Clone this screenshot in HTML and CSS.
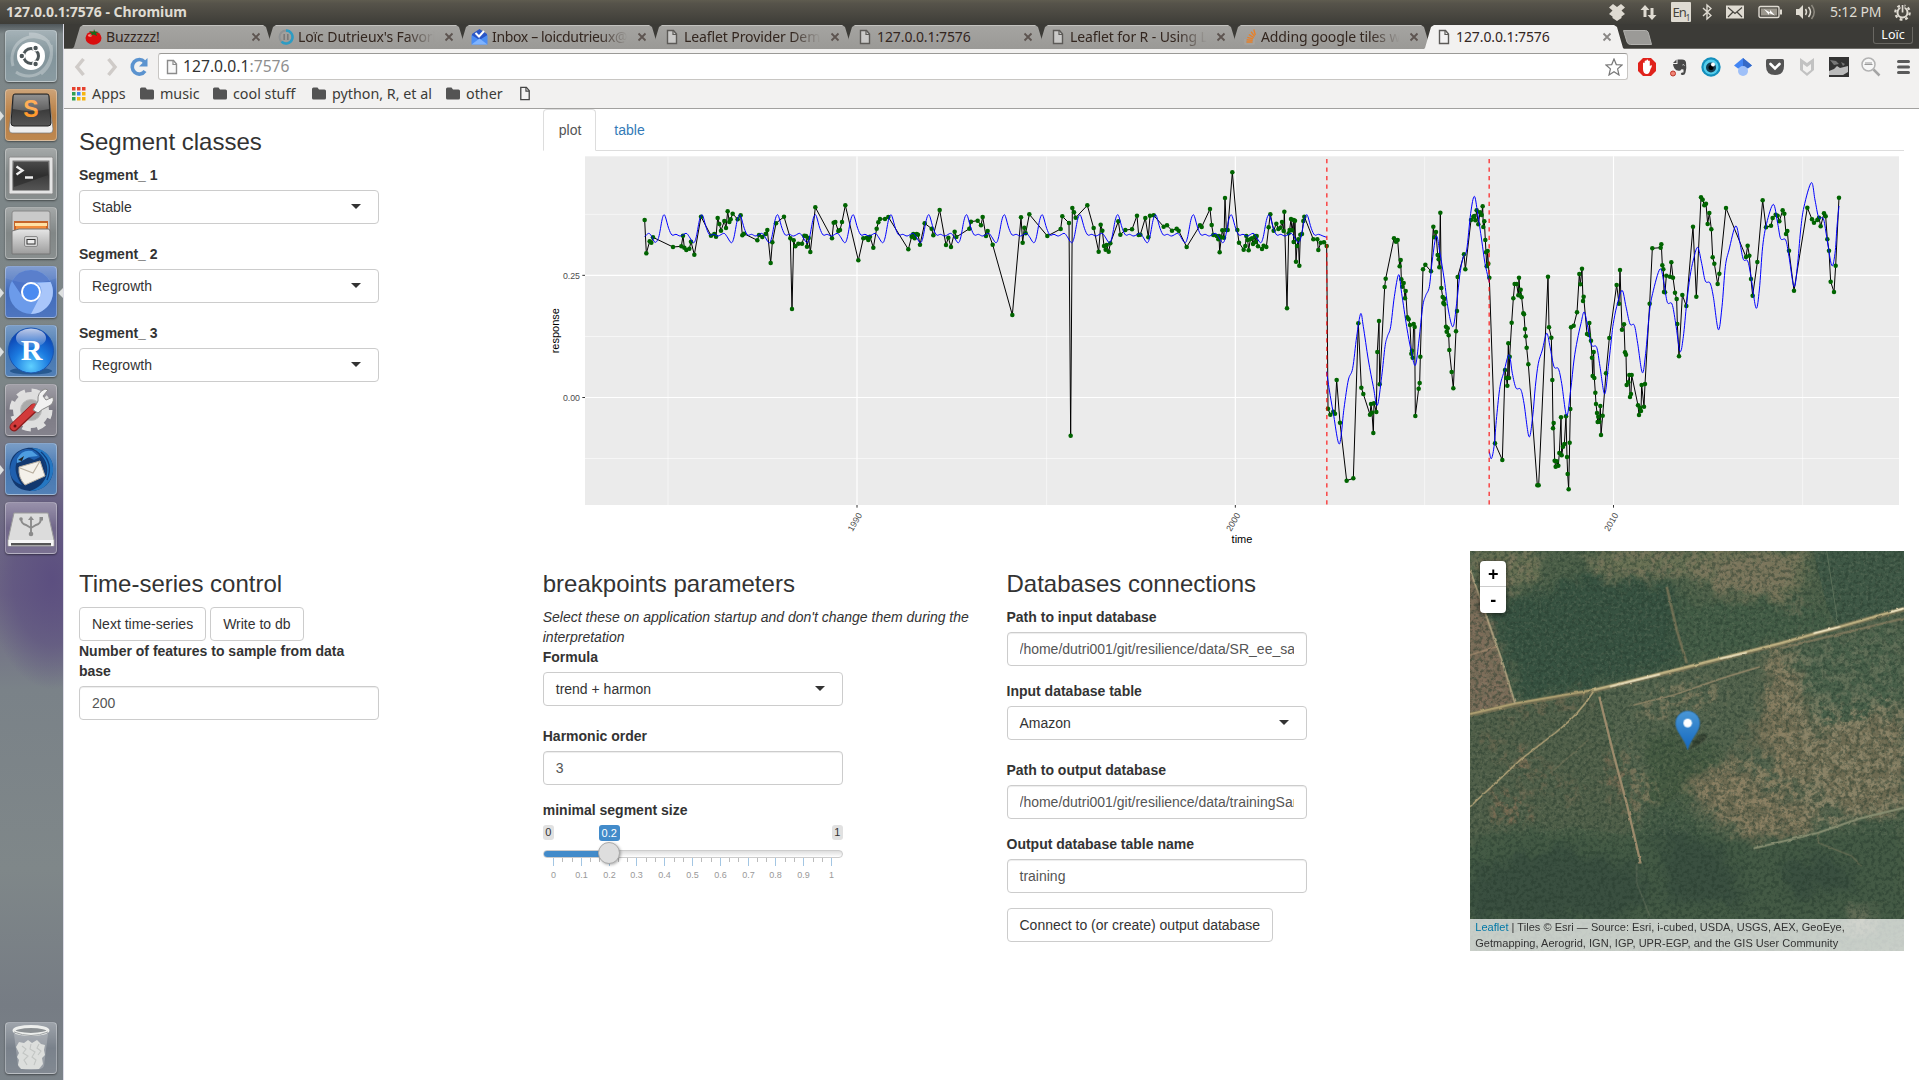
FILE: index.html
```html
<!DOCTYPE html>
<html lang="en">
<head>
<meta charset="utf-8">
<title>127.0.0.1:7576</title>
<link rel="stylesheet" href="styles.css">
</head>
<body>
<svg class="defs" width="0" height="0" aria-hidden="true">
  <defs>
    <symbol id="page" viewBox="0 0 12 16"><path d="M1.5 1.5h6l3 3.5v9.5h-9z" fill="#f4f4f3" fill-opacity=".5" stroke="currentColor" stroke-width="1.4"/><path d="M7 1.5V5.500h3.500" fill="none" stroke="currentColor" stroke-width="1.2"/></symbol>
    <symbol id="folder" viewBox="0 0 14 13"><path d="M0 2q0-1.500 1.500-1.500h4L7 2.500h5.500q1.500 0 1.500 1.500v7q0 1.500-1.500 1.500h-11Q0 12.500 0 11z" fill="#545454"/></symbol>
    <symbol id="close" viewBox="0 0 10 10"><path d="M1.500 1.500l7 7m0-7l-7 7" stroke="currentColor" stroke-width="1.800"/></symbol>
    <linearGradient id="gloss" x1="0" y1="0" x2="0" y2="1"><stop offset="0" stop-color="#fff" stop-opacity=".75"/><stop offset="1" stop-color="#fff" stop-opacity=".08"/></linearGradient>
    <linearGradient id="dark" x1="0" y1="0" x2="0" y2="1"><stop offset="0" stop-color="#777"/><stop offset=".5" stop-color="#3c3c3c"/><stop offset="1" stop-color="#555"/></linearGradient>
    <linearGradient id="silver" x1="0" y1="0" x2="0" y2="1"><stop offset="0" stop-color="#e6e6e6"/><stop offset="1" stop-color="#9d9d9d"/></linearGradient>
    <radialGradient id="rball" cx=".5" cy=".85" r=".8"><stop offset="0" stop-color="#5fd0ff"/><stop offset=".5" stop-color="#1c7be0"/><stop offset="1" stop-color="#0a3fae"/></radialGradient>
    <linearGradient id="pin" x1="0" y1="0" x2="0" y2="1"><stop offset="0" stop-color="#4a97d6"/><stop offset="1" stop-color="#1468bf"/></linearGradient>
  </defs>
</svg>

<header class="panel">
  <div class="panel-title">127.0.0.1:7576 - Chromium</div>
  <div class="tray">
    <svg width="18" height="18" viewBox="0 0 18 18"><path d="M5 1l4 3 4-3 4 3.500-3.500 3L17 11l-3.500 2.500v1.500L9 18l-4.500-3v-1.500L1 11l3.500-3.500L1 4.500z" fill="#dfdbd2"/></svg>
    <svg width="17" height="18" viewBox="0 0 17 18"><path d="M5 2L.5 7H3.500v7h3V7h3zM12 17l-4.500-5h3V5h3v7h3z" fill="#dfdbd2"/></svg>
    <span class="lang">En<sub>1</sub></span>
    <svg width="10" height="18" viewBox="0 0 10 18"><path d="M1 5l8 7.500L5 16V2l4 3.500L1 13" fill="none" stroke="#dfdbd2" stroke-width="1.400"/></svg>
    <svg width="18" height="14" viewBox="0 0 18 14"><rect y=".5" width="18" height="13" fill="#dfdbd2"/><path d="M2 2.500l7 6 7-6M2 12l5-5m9 5l-5-5" fill="none" stroke="#45433d" stroke-width="1.200"/></svg>
    <svg width="24" height="14" viewBox="0 0 24 14"><rect x="1" y="1.500" width="20" height="11" rx="1.500" fill="none" stroke="#dfdbd2" stroke-width="1.400"/><rect x="3" y="3.500" width="16" height="7" fill="#9b978d"/><path d="M22 4.500h2v5h-2z" fill="#dfdbd2"/><path d="M6 4l6 3.500V5l5 5.500-6-2.500v2z" fill="#fff"/></svg>
    <svg width="20" height="16" viewBox="0 0 20 16"><path d="M0 5h3l4-4v14l-4-4H0z" fill="#dfdbd2"/><path d="M9.500 5q2 3 0 6M12.500 3q4 5 0 10" fill="none" stroke="#dfdbd2" stroke-width="1.500"/><path d="M15.500 1q5.500 7 0 14" fill="none" stroke="#8d897f" stroke-width="1.500"/></svg>
    <span class="clock">5:12 PM</span>
    <svg width="17" height="17" viewBox="0 0 17 17"><circle cx="8.500" cy="8.500" r="5" fill="none" stroke="#dfdbd2" stroke-width="2"/><circle cx="8.500" cy="8.500" r="7.200" fill="none" stroke="#dfdbd2" stroke-width="2.200" stroke-dasharray="2.800 2.850"/><path d="M6.500 0h4v8h-4z" fill="#4c4942"/><path d="M7.700 1h1.700v7.500H7.700z" fill="#dfdbd2"/></svg>
  </div>
</header>

<div class="desktop">
  <nav class="launcher">
    <div class="tile t-dash"><svg viewBox="0 0 52 52"><path d="M8 36C2 14 24-2 44 12M46 15C50 38 28 54 11 42M24 4C48 2 54 30 36 44" fill="none" stroke="#fff" stroke-opacity=".28" stroke-width="3"/><circle cx="26" cy="26" r="14" fill="#fff"/><circle cx="26" cy="26" r="7.500" fill="none" stroke="#4c5558" stroke-width="3"/><g fill="#4c5558" stroke="#fff" stroke-width="1.200"><circle cx="16.800" cy="26" r="2.800"/><circle cx="30.600" cy="18" r="2.800"/><circle cx="30.600" cy="34" r="2.800"/></g></svg></div>
    <div class="tile t-sublime running"><svg viewBox="0 0 52 52"><path d="M8 8q0-2 2-2h32q2 0 2 2l4 32q0 4-3 4H7q-3 0-3-4z" fill="#eee" stroke="#777" stroke-width=".7"/><path d="M10 5h32q2 0 2 2l2 27q0 3-3 3H9q-3 0-3-3L8 7q0-2 2-2z" fill="url(#dark)" stroke="#222"/><text x="26" y="28" text-anchor="middle" font-family="Liberation Sans" font-weight="700" font-size="23" fill="#ff9a2e">S</text><path d="M9 6h34l1 14q-17 4-36 0z" fill="#fff" opacity=".2"/></svg></div>
    <div class="tile t-grey"><svg viewBox="0 0 52 52"><rect x="4" y="9" width="44" height="37" rx="1.500" fill="#e4e4e4" stroke="#8a8a8a"/><rect x="7.500" y="12.500" width="37" height="30" fill="url(#dark)"/><path d="M9 14h34v13L9 39z" fill="#222" opacity=".5"/><path d="M11.500 18.500l6 4-6 4M20 29.500h8" fill="none" stroke="#eee" stroke-width="2.300"/></svg></div>
    <div class="tile t-grey"><svg viewBox="0 0 52 52"><path d="M7 6q0-2 2-2h34q2 0 2 2v18H7z" fill="#c9c9c9" stroke="#888"/><path d="M9 14h34v14H9z" fill="#c5642a"/><path d="M10 16h32v3H10z" fill="#ffe1a6"/><path d="M11 19h30v4H11z" fill="#f28c3c"/><path d="M7 24l7-2h30l1 2v23H7z" fill="url(#silver)" stroke="#777"/><rect x="19.500" y="29.500" width="13" height="10" rx="1.500" fill="#d7d7d7" stroke="#888"/><rect x="22" y="32.500" width="8" height="4.500" fill="#eee" stroke="#333"/></svg></div>
    <div class="tile t-chromium running focused"><svg viewBox="0 0 52 52"><circle cx="26" cy="26" r="22" fill="#6c9bea"/><path d="M26 4a22 22 0 0 1 19.500 12H26a10 10 0 0 0-9 14L7 15A22 22 0 0 1 26 4z" fill="#4d75c8"/><path d="M45.500 16A22 22 0 0 1 26 48l9-17.500A10 10 0 0 0 32 17z" fill="#a9c6fa"/><circle cx="26" cy="26" r="10" fill="#fff"/><circle cx="26" cy="26" r="8" fill="#4a8af0"/><path d="M0 0h52v12Q26 22 0 12z" fill="#fff" opacity=".08"/></svg></div>
    <div class="tile t-r running"><svg viewBox="0 0 52 52"><ellipse cx="26" cy="46" rx="21" ry="3.500" fill="#0b3f78" opacity=".6"/><circle cx="26" cy="25.500" r="22.500" fill="url(#rball)" stroke="#1a55b0"/><text x="26.500" y="35" text-anchor="middle" font-family="Liberation Serif" font-weight="700" font-size="30" fill="#fff">R</text><ellipse cx="26" cy="13" rx="15" ry="9.500" fill="url(#gloss)"/></svg></div>
    <div class="tile t-tools"><svg viewBox="0 0 52 52"><circle cx="26" cy="26" r="18" fill="none" stroke="#e0e0e0" stroke-width="7" stroke-dasharray="8 6.140"/><circle cx="26" cy="26" r="13.500" fill="none" stroke="#dedede" stroke-width="9"/><circle cx="26" cy="26" r="10.500" fill="#aaa" stroke="#bbb"/><path d="M9 43L29 24" stroke="#8c1d1d" stroke-width="9" stroke-linecap="round"/><path d="M9 42.500L29 23.500" stroke="#d23a3a" stroke-width="7" stroke-linecap="round"/><path d="M28 26l5-9q-1-9 7-12l3 1-5 6 3 4 7-3q2 7-6 10-5 2-9 6z" fill="#f1f1f1" stroke="#888"/><circle cx="10" cy="42" r="1.500" fill="#5e1010"/></svg></div>
    <div class="tile t-mail running"><svg viewBox="0 0 52 52"><path d="M5 28C3 13 15 3 29 5c13 2 20 12 19 23-1 12-10 20-23 20C12 47 6 40 5 28z" fill="#12386f"/><path d="M27 5c15 0 22 12 21 24-2 12-11 19-23 19 9-3 15-9 17-17 2-11-4-20-15-26z" fill="#2577c2"/><path d="M36 9c8 7 11 16 6 28M31 8c9 8 12 18 7 27" fill="none" stroke="#0f3f82" stroke-width="1.300"/><path d="M14 24l21-6 5 15-20 9q-7-7-6-18z" fill="#f4f1ea" stroke="#b5ada0"/><path d="M15 25l13 5 7-12" fill="none" stroke="#b9b0a0" stroke-width="1.200"/><path d="M5 27C6 16 11 8 21 6q10-1 14 8l-6 3q-6-4-12-2C9 17 8 30 17 42 8 39 5 33 5 27z" fill="#1f5fae"/><path d="M12 16q5-10 15-8l6 5-9 1-9 5-3 1z" fill="#4d9de0"/><path d="M13 17l6-4-2 5z" fill="#222"/></svg></div>
    <div class="tile t-usb"><svg viewBox="0 0 52 52"><path d="M9 11h34l6 27v6H3v-6z" fill="#dcdcdc" stroke="#9a9a9a"/><path d="M3.500 38h45v6h-45z" fill="#f7f7f7"/><path d="M6 41h40v2.500H6z" fill="#555"/><path d="M26 32V17m-10-1q0 6 5 7l5 3 5-3q5-1 5-7" fill="none" stroke="#8b8b8b" stroke-width="1.900"/><path d="M23 18l3-4 3 4z" fill="#8b8b8b"/><circle cx="16" cy="17" r="1.800" fill="#8b8b8b"/><path d="M34.500 15h3.500v3.500h-3.500z" fill="#8b8b8b"/><circle cx="26" cy="32" r="2.300" fill="#8b8b8b"/></svg></div>
    <div class="tile t-trash"><svg viewBox="0 0 52 52"><path d="M9 12h34l-4 32q-1 4-13 4t-13-4z" fill="#fff" fill-opacity=".22"/><path d="M11 25l3-5 5 1 4-3 4 3 5-3 4 4 4 1-1 5 1 5-3 3 1 6-4 5H16l-3-4 1-5-2-3 2-4z" fill="#dcdedc"/><path d="M17 24l4 3-3 4 5 3-4 4 3 5m4-21l-1 5 5 3-3 5 4 3-2 5m5-21l-2 4 4 3-3 4" fill="none" stroke="#c2c5c3" stroke-width="1.100"/><ellipse cx="26" cy="8.500" rx="17" ry="4" fill="#8b9093" stroke="#eceeec" stroke-width="3"/><path d="M9 10q17 7 34 0" fill="none" stroke="#9da1a3"/></svg></div>
  </nav>

  <div class="browser">
    <div class="tabstrip">
      <div class="tab"><span class="fav"><svg width="17" height="16" viewBox="0 0 17 16"><ellipse cx="8.500" cy="9" rx="8" ry="6.800" fill="#d90d0d"/><ellipse cx="5" cy="6.500" rx="2" ry="1.300" fill="#ff8b80"/><path d="M8.500 3L4 2l3 3-2 2 3.500-1.500L12 7l-1-3 3-1-4-.5L9 0z" fill="#176b1c"/></svg></span><span class="tt">Buzzzzz!</span><svg class="x"><use href="#close"/></svg></div>
      <div class="tab"><span class="fav"><svg width="16" height="16" viewBox="0 0 16 16"><circle cx="8" cy="8" r="6.500" fill="none" stroke="#8e9294" stroke-width="2"/><path d="M8 1.500a6.500 6.500 0 1 1-4.500 11.200" fill="none" stroke="#2c9cc4" stroke-width="2.500"/><path d="M6.200 5v6M9.800 5v6" stroke="#7a7a7a" stroke-width="1.600"/></svg></span><span class="tt fade">Loïc Dutrieux's Favorites</span><svg class="x"><use href="#close"/></svg></div>
      <div class="tab"><span class="fav"><svg width="17" height="16" viewBox="0 0 17 16"><path d="M1 5l7.500-5L16 5v6H1z" fill="#2a56c6"/><path d="M.5 6l8 5 8-5v9.500H.5z" fill="#4a8df4"/><path d="M.5 15.500l8-6 8 6z" fill="#7eb3ff"/><path d="M4.500 4L8 7.500 13 2" fill="none" stroke="#fff" stroke-width="2"/></svg></span><span class="tt fade tight">Inbox – loicdutrieux@gmail</span><svg class="x"><use href="#close"/></svg></div>
      <div class="tab"><span class="fav"><svg width="12" height="16"><use href="#page"/></svg></span><span class="tt fade">Leaflet Provider Demo</span><svg class="x"><use href="#close"/></svg></div>
      <div class="tab"><span class="fav"><svg width="12" height="16"><use href="#page"/></svg></span><span class="tt">127.0.0.1:7576</span><svg class="x"><use href="#close"/></svg></div>
      <div class="tab"><span class="fav"><svg width="12" height="16"><use href="#page"/></svg></span><span class="tt fade">Leaflet for R - Using Leaflet</span><svg class="x"><use href="#close"/></svg></div>
      <div class="tab"><span class="fav"><svg width="14" height="16" viewBox="0 0 14 16"><path d="M2 10v5h9v-5" fill="none" stroke="#aaa59f" stroke-width="1.200"/><path d="M3.500 13h6M3.700 10.800l6 .6M4.300 8.300l5.700 1.600M5.800 5.500l5 3.200M8 2.800l3.700 4.600M10.800.5l1.500 5.500" stroke="#e8812a" stroke-width="1.400"/></svg></span><span class="tt fade">Adding google tiles with</span><svg class="x"><use href="#close"/></svg></div>
      <div class="tab active"><span class="fav"><svg width="12" height="16"><use href="#page"/></svg></span><span class="tt">127.0.0.1:7576</span><svg class="x"><use href="#close"/></svg></div>
      <svg class="newtab" width="30" height="15" viewBox="0 0 30 15"><path d="M1.500.5h22q2 0 2.800 2L29.500 14.500h-21q-2.500 0-3.500-2.500z" fill="#9b9a97" stroke="#b1b0ad"/></svg>
      <span class="profile">Loïc</span>
    </div>

    <div class="toolbar">
      <svg width="12" height="20" viewBox="0 0 12 20"><path d="M9.500 2L3 10l6.500 8" fill="none" stroke="#cfcbc8" stroke-width="3.500"/></svg>
      <svg class="fwd" width="12" height="20" viewBox="0 0 12 20"><path d="M2.500 2L9 10l-6.500 8" fill="none" stroke="#cfcbc8" stroke-width="3.500"/></svg>
      <svg class="reload" width="18" height="20" viewBox="0 0 18 20"><path d="M14.500 5A7 7.300 0 1 0 15 14" fill="none" stroke="#5b93cf" stroke-width="3.600"/><path d="M17.500 1v8.500H9z" fill="#5b93cf"/></svg>
      <div class="omnibox">
        <svg class="pg" width="12" height="16"><use href="#page"/></svg>
        <span class="url">127.0.0.1<i>:7576</i></span>
        <svg class="star" width="18" height="18" viewBox="0 0 18 18"><path d="M9 1l2.300 5.600 5.700.4-4.400 3.900L14 17l-5-3.200L4 17l1.400-6.100L1 7l5.700-.4z" fill="#fff" stroke="#777" stroke-width="1.200"/></svg>
      </div>
      <div class="exts">
        <svg viewBox="0 0 20 20"><path d="M6 1h8l5 5v8l-5 5H6l-5-5V6z" fill="#e0221b"/><path d="M6 9V6q1-1 1.700 0V4q1-1 1.700 0V3q1.200-1 1.700 0v1q1-1 1.700 0v5l1.700-1q1 1-1 4-1 5-3.500 5Q6 17 6 12z" fill="#fff"/></svg>
        <svg viewBox="0 0 20 20"><path d="M4 6l3.500-3.500V6z" fill="#484848"/><path d="M8.500 2.500h3.500q4.500-.5 5 3 .8 5-.5 10-.7 3-3.500 2.500-2.500-1 0-2.500h1.500v-3q-2.500-1-3 1-4 1-6-2Q4 9 4 7h4.500z" fill="#484848"/><path d="M13.500 8q1.500-1 2 .5" stroke="#ddd" fill="none"/><circle cx="4" cy="16.500" r="2.500" fill="#f08577" stroke="#bd3528"/></svg>
        <svg viewBox="0 0 20 20"><circle cx="10" cy="10" r="9.700" fill="#148fbc"/><circle cx="10" cy="10" r="7.500" fill="#55cdec"/><circle cx="10" cy="10.500" r="5" fill="#163d52"/><circle cx="10" cy="10.500" r="2.500" fill="#000"/><circle cx="12" cy="7.500" r="2" fill="#fff"/></svg>
        <svg viewBox="0 0 20 20"><path d="M10 1L1 8.500l4 3h10l4-3z" fill="#4285f4"/><path d="M10 1v10h5l4-2.500z" fill="#3569c6"/><circle cx="10" cy="14" r="5" fill="#9fc0f8"/></svg>
        <svg viewBox="0 0 20 20"><path d="M1 3.500Q1 2 2.500 2h15Q19 2 19 3.500V9q0 9-9 9T1 9z" fill="#545454"/><path d="M5.500 7L10 11.500 14.500 7" fill="none" stroke="#fff" stroke-width="2.600" stroke-linecap="round"/></svg>
        <svg viewBox="0 0 20 20"><path d="M3 1l7 5 7-5v12l-7 6-7-6zM6 7v6l4 3 4-3V7l-4 3z" fill="#c2c2c2" fill-rule="evenodd"/></svg>
        <svg viewBox="0 0 20 20"><path d="M0 0h20v20H0z" fill="#333"/><path d="M0 14l5-2 3-3 3 2 8-2v6l-5 3H0z" fill="#bbb"/><path d="M1 3l6 1 3 3-5 1zM12 5l4 2-2 2z" fill="#777"/></svg>
        <svg viewBox="0 0 20 20"><circle cx="7.500" cy="7.500" r="6.500" fill="#f7f7f7" stroke="#b3b3b3" stroke-width="1.500"/><path d="M3.500 7.500h8M4 6h7" stroke="#999"/><path d="M12.500 12.500l6 6" stroke="#a5a5a5" stroke-width="2.500"/></svg>
        <svg viewBox="0 0 20 20"><path d="M5.500 4.500h10M5.500 10h10M5.500 15.500h10" stroke="#5a5a5a" stroke-width="3" stroke-linecap="round"/></svg>
      </div>
    </div>

    <div class="bookmarks">
      <span class="bm"><svg width="14" height="14" viewBox="0 0 14 14"><path d="M0 0h3.500v3.500H0zM5 0h3.500v3.500H5zM10 0h3.500v3.500H10z" fill="#e6402d"/><path d="M0 5h3.500v3.500H0zM0 10h3.500v3.500H0z" fill="#2ea052"/><path d="M5 5h3.500v3.500H5z" fill="#3e83ee"/><path d="M10 5h3.500v3.500H10zM5 10h3.500v3.500H5zM10 10h3.500v3.500H10z" fill="#f5b40f"/></svg><span style="width:35px">Apps</span></span>
      <span class="bm"><svg width="14" height="13"><use href="#folder"/></svg><span style="width:40px">music</span></span>
      <span class="bm"><svg width="14" height="13"><use href="#folder"/></svg><span style="width:66px">cool stuff</span></span>
      <span class="bm"><svg width="14" height="13"><use href="#folder"/></svg><span style="width:101px">python, R, et al</span></span>
      <span class="bm"><svg width="14" height="13"><use href="#folder"/></svg><span style="width:40px">other</span></span>
      <svg class="dark" width="12" height="15"><use href="#page"/></svg>
    </div>

    <main class="app">
      <div class="row top">
        <section class="col">
          <h3>Segment classes</h3>
          <div class="group sel"><label>Segment_ 1</label><div class="field select">Stable</div></div>
          <div class="group sel"><label>Segment_ 2</label><div class="field select">Regrowth</div></div>
          <div class="group sel"><label>Segment_ 3</label><div class="field select">Regrowth</div></div>
        </section>
        <section class="plot">
          <ul class="nav-tabs"><li class="on">plot</li><li>table</li></ul>
          <svg class="chart" viewBox="9 3 4083 1200">
            <rect x="135" y="19" width="3942" height="1046" fill="#ebebeb"/>
            <g stroke="#fff" stroke-width="1.700"><path d="M384 19v1046M1520 19v1046M2654 19v1046M3788 19v1046M135 193h3942M135 559.500h3942M135 925.500h3942"/></g>
            <g stroke="#fff" stroke-width="3.500"><path d="M951 19v1046M2086 19v1046M3220.500 19v1046M135 376h3942M135 742.500h3942"/></g>
            <path d="M127 376h8M127 742.500h8M951 1065v8M2086 1065v8M3220.500 1065v8" stroke="#333" stroke-width="3"/>
            <path id="obs" fill="none" stroke="#000" stroke-width="3"/>
            <g id="dots" fill="#006400"></g>
            <path id="fit" fill="none" stroke="#00f" stroke-width="3"/>
            <path d="M2360.500 27V1065M2847.500 27V1065" stroke="#f00" stroke-opacity=".8" stroke-width="4" stroke-dasharray="12.800 12.800"/>
            <g class="ticks"><text x="120" y="386" text-anchor="end">0.25</text><text x="120" y="752" text-anchor="end">0.00</text>
              <text transform="translate(967 1095) rotate(-60)" text-anchor="end">1990</text>
              <text transform="translate(2102 1095) rotate(-60)" text-anchor="end">2000</text>
              <text transform="translate(3236 1095) rotate(-60)" text-anchor="end">2010</text></g>
            <g class="titles"><text x="2106" y="1178" text-anchor="middle">time</text><text transform="translate(57 542) rotate(-90)" text-anchor="middle">response</text></g>
          </svg>
        </section>
      </div>

      <div class="row">
        <section class="col">
          <h3>Time-series control</h3>
          <div class="btns"><span class="btn">Next time-series</span><span class="btn">Write to db</span></div>
          <div class="group"><label>Number of features to sample from data base</label><div class="field">200</div></div>
        </section>
        <section class="col">
          <h3>breakpoints parameters</h3>
          <em>Select these on application startup and don't change them during the interpretation</em>
          <div class="group sel"><label>Formula</label><div class="field select">trend + harmon</div></div>
          <div class="group"><label>Harmonic order</label><div class="field">3</div></div>
          <div class="group">
            <label>minimal segment size</label>
            <div class="slider">
              <span class="lim">0</span><span class="lim">1</span><span class="val">0.2</span>
              <div class="rail"><div class="fill" style="width:22%"></div></div>
              <div class="knob"></div>
              <svg class="scale" width="300" height="22"><path id="minor" stroke="#bbb"/><path id="major" stroke="#a3c6e3"/><g id="nums"></g></svg>
            </div>
          </div>
        </section>
        <section class="col">
          <h3>Databases connections</h3>
          <div class="group"><label>Path to input database</label><div class="field"><span>/home/dutri001/git/resilience/data/SR_ee_sample.sqlite</span></div></div>
          <div class="group sel"><label>Input database table</label><div class="field select">Amazon</div></div>
          <div class="group"><label>Path to output database</label><div class="field"><span>/home/dutri001/git/resilience/data/trainingSample.sqlite</span></div></div>
          <div class="group"><label>Output database table name</label><div class="field">training</div></div>
          <span class="btn">Connect to (or create) output database</span>
        </section>
        <section class="col">
          <div class="map">
            <svg class="imagery" viewBox="30 33 1302 1200" preserveAspectRatio="none" color-interpolation-filters="sRGB">
              <defs>
                <filter id="soft" x="-20%" y="-20%" width="140%" height="140%"><feGaussianBlur stdDeviation="18" result="b"/><feTurbulence type="fractalNoise" baseFrequency=".02" numOctaves="4" seed="4"/><feDisplacementMap in="b" scale="90" xChannelSelector="R" yChannelSelector="G"/></filter>
                <filter id="scrub" x="-20%" y="-20%" width="140%" height="140%"><feGaussianBlur stdDeviation="22" result="b"/><feTurbulence type="fractalNoise" baseFrequency=".035" numOctaves="6" seed="9" result="n"/><feDisplacementMap in="b" in2="n" scale="110" xChannelSelector="R" yChannelSelector="G" result="d"/><feColorMatrix in="n" type="matrix" values="0 0 0 0 0 0 0 0 0 0 0 0 0 0 0 0 0 6 0 -2.600"/><feComposite in="d" operator="in"/></filter>
                <filter id="rough" x="-5%" y="-5%" width="110%" height="110%"><feTurbulence type="fractalNoise" baseFrequency=".05" numOctaves="2"/><feDisplacementMap in="SourceGraphic" scale="7" xChannelSelector="R" yChannelSelector="G"/></filter>
                <filter id="grain" x="0" y="0" width="100%" height="100%"><feTurbulence type="fractalNoise" baseFrequency=".09" numOctaves="4" seed="2"/><feColorMatrix type="matrix" values="0 0 0 0 .14 0 0 0 0 .22 0 0 0 0 .17 4 0 0 0 -1.750"/></filter>
                <filter id="glint" x="0" y="0" width="100%" height="100%"><feTurbulence type="fractalNoise" baseFrequency=".11" numOctaves="4" seed="21"/><feColorMatrix type="matrix" values="0 0 0 0 .58 0 0 0 0 .6 0 0 0 0 .5 0 5 0 0 -2.600"/></filter>
              </defs>
              <rect x="30" y="33" width="1302" height="1200" fill="#4d6049"/>
              <path d="M90 200L380 100l260 20 40 250-250 70-260 50z" fill="#375241" filter="url(#soft)"/>
              <path d="M1060 33h272v170l-200 60-30-60z" fill="#3f5846"/>
              <path d="M640 190l460 0 30 75-440 110z" fill="#435c46" filter="url(#soft)"/>
              <path d="M30 33h200l-10 90-160 20zM400 33h650l-40 130-120 10-150-60-340-10z" fill="#6a7154" filter="url(#soft)"/>
              <path d="M720 70l300-30-60 130-170-10z" fill="#78745a" filter="url(#soft)"/>
              <path d="M30 33h200l-10 90-160 20zM400 33h640l-60 130-240-40-340-20zM980 160l60-10-20 90-40-20z" fill="#80785f" filter="url(#scrub)" opacity=".7"/>
              <path d="M30 90l55 155 80 245-135 35z" fill="#766a56"/>
              <path d="M30 90l50 155 85 245-135 35z" fill="#86715e" filter="url(#scrub)" opacity=".7"/>
              <path d="M30 530l370-70 60 200 70 230-200-30-300 60z" fill="#505f49"/>
              <path d="M430 445l902-230v590l-450 120-90-20-150-120-100 90z" fill="#52624c"/>
              <path d="M970 320l362-70v260l-250 80-80-90z" fill="#485f49" filter="url(#soft)"/>
              <path d="M560 560l220 60-60 120-120 90-40-60z" fill="#42583f" filter="url(#soft)" opacity=".8"/>
              <path d="M930 330l60 0 60 200 70 200-150 0-40-120-100 20 90-130zM1060 580l272-80v300l-150 40-110-80zM670 730l150-80 110 110 130 10 20 90-200 50-80-60z" fill="#746c53" filter="url(#soft)" opacity=".8"/>
              <path d="M920 330l70 0 60 180 282-20v320l-460 110-200-180 150-90 110 0-20-120zM470 580l60 90 60 90-40 100zM520 480l280-60-20 60-220 50zM540 760l70 20-60 60z" fill="#958768" filter="url(#scrub)" opacity=".75"/>
              <path d="M960 330l372-70v600l-300 40z" fill="#8a8a70" filter="url(#scrub)" opacity=".35"/>
              <path d="M90 780l80-30 40 60-80 50zM140 660l70-30 20 50-60 20zM240 690l50 10-30 60zM300 750l70-20-20 50zM430 660l50-10 50 180-40-40zM150 510l250-50-40 30-220 40zM60 580l70 20-30 30z" fill="#8c7157" filter="url(#scrub)"/>
              <path d="M30 900l150-40 340 30 60-90 60-20 170 130 300-40 222-60v423H30z" fill="#445a45" filter="url(#soft)"/>
              <path d="M30 1000l250-80 240 60 60 100-150 60H30zM600 850l200 90 60 150-240 0zM960 980l150-40 90 100-200 30z" fill="#3a4f40" filter="url(#soft)"/>
              <path d="M1150 1110l90-10 20 60-80 20z" fill="#69705a" filter="url(#soft)"/>
              <rect x="30" y="33" width="1302" height="1200" filter="url(#grain)" opacity=".45"/>
              <rect x="30" y="33" width="1302" height="850" filter="url(#glint)" opacity=".16"/>
              <g fill="none" filter="url(#rough)">
                <path d="M30 525L165 493 400 452 660 388 960 312 1140 260 1332 207" stroke="#8e7d5c" stroke-width="14" opacity=".6"/>
                <path d="M30 522L165 490 400 450" stroke="#b0a273" stroke-width="6"/>
                <path d="M400 450L660 386 960 310 1140 260 1332 205" stroke="#c0b384" stroke-width="7"/>
                <path d="M450 440L600 403M780 356L860 338M1060 280L1140 260M1290 217L1332 205" stroke="#f0e6c4" stroke-width="5"/>
                <path d="M960 325L1332 235" stroke="#8f8264" stroke-width="7" opacity=".7"/>
                <path d="M400 455Q360 520 290 575L180 660 30 800" stroke="#b0a177" stroke-width="4.500"/>
                <path d="M418 470L460 640 500 790 542 970" stroke="#9c8b6c" stroke-width="7"/>
                <path d="M530 970l0 60 40 100" stroke="#78806a" stroke-width="3" opacity=".6"/>
                <path d="M620 140l30 130 30 100" stroke="#8e8060" stroke-width="8" opacity=".65"/>
                <path d="M30 90L90 260 125 360 165 490" stroke="#b5a683" stroke-width="5"/>
                <path d="M30 345L110 320" stroke="#a0876c" stroke-width="4"/>
                <path d="M520 495L640 465 800 410 900 380" stroke="#96896a" stroke-width="4"/>
                <path d="M880 925L1075 878 1200 835 1332 803" stroke="#888f72" stroke-width="6"/>
                <path d="M950 330L975 480 1000 520M270 700L385 600M1075 878v30l100 40 30 30" stroke="#8c8465" stroke-width="4" opacity=".5"/>
                <path d="M1100 33L1135 255" stroke="#5c705a" stroke-width="3"/>
              </g>
              <path d="M690 625q20-52 46-42 16 16-46 45z" fill="#000" opacity=".25"/>
              <path d="M683 629C674 594 647 578 647 549a36 36 0 0 1 72 0C719 578 692 594 683 629z" fill="url(#pin)" stroke="#2a70b0" stroke-width="2"/>
              <circle cx="683" cy="549" r="13" fill="#fff"/>
            </svg>
            <div class="zoomer"><span>+</span><span>-</span></div>
            <div class="credit"><a>Leaflet</a> | Tiles © Esri — Source: Esri, i-cubed, USDA, USGS, AEX, GeoEye, Getmapping, Aerogrid, IGN, IGP, UPR-EGP, and the GIS User Community</div>
          </div>
        </section>
      </div>
    </main>
  </div>
</div>
<script src="plot.js"></script>
</body>
</html>
```
FILE: styles.css
```css
* { box-sizing: border-box; }
body { margin: 0; width: 1919px; height: 1080px; overflow: hidden; background: #fff; font: 14px/20px "Liberation Sans", Arial, sans-serif; color: #333; display: flex; flex-direction: column; }
svg { display: block; flex: none; }
.defs { position: absolute; }

.panel { height: 24px; flex: none; display: flex; justify-content: space-between; align-items: center; padding: 0 8px 0 6px; background: linear-gradient(#5f5c4f, #56534a 15%, #3e3d38); color: #dfdbd2; font-family: "Noto Sans", sans-serif; }
.panel-title { font-weight: 700; font-size: 14px; }
.tray { display: flex; align-items: center; gap: 14px; }
.lang { width: 20px; height: 20px; margin-right: -3px; background: #dfdbd2; border-radius: 1px; color: #45433d; font-size: 13px; line-height: 21px; letter-spacing: -1px; text-align: center; white-space: nowrap; }
.lang sub { font-size: 8px; line-height: 0; }
.clock { width: 53px; margin-right: -3px; font-size: 14px; letter-spacing: -.2px; white-space: nowrap; }

.desktop { flex: 1; min-height: 0; display: flex; }
.launcher { width: 64px; flex: none; display: flex; flex-direction: column; gap: 7px; padding: 6px 0 6px 5px; border-right: 1px solid #dcdce6; background: radial-gradient(ellipse 65px 110px at 52px 555px, #5c4f80, rgba(92,79,128,.6) 60%, transparent), linear-gradient(#4f565a 0, #7e8789 10px, #7c8587 34%, #716f84 44%, #6e6785 54%, #7a8288 63%, #7f8789 80%, #767c84 93%, #7b8389); }
.tile { width: 52px; height: 52px; flex: none; border-radius: 4px; position: relative; border: 1px solid rgba(255,255,255,.3); box-shadow: 0 1px 2px rgba(0,0,0,.45); background-image: linear-gradient(rgba(255,255,255,.3), rgba(255,255,255,.04) 50%, rgba(255,255,255,.1)); }
.tile svg { width: 52px; height: 52px; margin: -1px; }
.t-dash { background-color: #7d9097; }
.t-sublime { background-color: #b67a3c; }
.t-grey { background-color: #7c8282; }
.t-chromium { background-color: #3a66b8; }
.t-r, .t-mail { background-color: #3f72ae; }
.t-tools { background-color: #777580; }
.t-usb { background-color: #6b6185; }
.t-trash { background-color: #747c86; margin-top: auto; }
.running::before { content: ""; position: absolute; left: -6px; top: 21px; border: solid transparent; border-width: 5px 0 5px 4px; border-left-color: #dde0e0; }
.focused::after { content: ""; position: absolute; right: -7px; top: 21px; border: solid transparent; border-width: 5px 5px 5px 0; border-right-color: #dde0e0; }

.browser { flex: 1; min-width: 0; display: flex; flex-direction: column; }
.tabstrip { height: 25px; flex: none; display: flex; padding: 1px 6px 0 8px; background: #3c3b37; border-bottom: 1px solid #6e6d69; font-family: "Noto Sans", sans-serif; }
.tab { width: 202px; height: 24px; flex: none; margin-right: -9px; padding: 0 12px; display: flex; align-items: center; color: #4c4340; background: linear-gradient(#c3c2bf 0 1px, #a5a4a1 1px, #9a9996); clip-path: polygon(0 100%, 2px 92%, 8px 8%, 11px 0, 191px 0, 194px 8%, 200px 92%, 202px 100%); }
.tab.active { background: #f2f1f0; height: 25px; padding-bottom: 1px; color: #444; }
.fav { margin-right: 4px; }
.tab .fav svg { margin-left: 1px; color: #5c5a57; }
.fav:has(use) { margin-right: 6px; margin-left: 2px; }
.tt { flex: 1; white-space: nowrap; overflow: hidden; color: #33261f; letter-spacing: -.1px; }
.tight { letter-spacing: -.35px; }
.fade { mask-image: linear-gradient(90deg, #000 78%, transparent 99%); }
.x { width: 10px; height: 10px; margin: 0 1px 0 8px; color: #5d5450; }
.active .x { color: #8a8785; }
.newtab { margin: 5px 0 0 6px; }
.profile { margin: 2px 0 0 auto; width: 40px; height: 17px; border: 1px solid #696762; border-top: 0; border-radius: 0 0 3px 3px; color: #fff; font-size: 12.500px; line-height: 15px; text-align: center; }

.toolbar { height: 35px; flex: none; display: flex; align-items: center; padding: 0 6px 0 10px; background: #f2f1f0; }
.fwd { margin-left: 20px; }
.reload { margin-left: 12px; }
.omnibox { margin-left: 10px; width: 1470px; height: 27px; flex: none; display: flex; align-items: center; padding: 0 4px 0 7px; background: #fff; border: 1px solid #c8c6c3; border-top-color: #9b9a97; border-radius: 3px; font: 15.700px/25px "Noto Sans", sans-serif; color: #333; }
.omnibox .pg { color: #8b8b8b; margin-right: 5px; }
.url { flex: 1; }
.url i { font-style: normal; color: #8f8f8f; }
.exts { display: flex; gap: 12px; margin-left: 9px; }
.exts svg { width: 20px; height: 20px; }

.bookmarks { height: 25px; flex: none; display: flex; align-items: center; padding: 0 0 5px 8px; gap: 13px; background: #f2f1f0; border-bottom: 1px solid #a2a19f; font: 14.300px/20px "Noto Sans", sans-serif; color: #3c3b37; }
.bm { display: flex; align-items: center; gap: 6px; white-space: nowrap; }
.dark { color: #444; }

.app { flex: 1; padding: 0 15px; }
.row { display: flex; }
.row.top { height: 442px; }
.col { width: 463.750px; flex: none; padding-right: 29.750px; }
h3 { margin: 20px 0 10px; font-size: 24px; font-weight: 400; line-height: 26.400px; }
em { display: block; }
.group { width: 300px; margin-bottom: 15px; }
.group.sel { margin-bottom: 20px; }
label { display: block; font-weight: 700; margin-bottom: 5px; }
.field { height: 34px; padding: 6px 12px; border: 1px solid #ccc; border-radius: 4px; color: #555; box-shadow: inset 0 1px 1px rgba(0,0,0,.075); white-space: nowrap; }
.field span { display: block; overflow: hidden; }
.select { color: #333; box-shadow: none; display: flex; justify-content: space-between; align-items: center; padding-right: 17px; }
.select::after { content: ""; border: solid transparent; border-width: 5px 5px 0; border-top-color: #333; margin-top: -1px; }
.btn { display: inline-block; height: 34px; padding: 6px 12px; border: 1px solid #ccc; border-radius: 4px; white-space: nowrap; }
.btns { display: flex; gap: 4px; }

.plot { width: 1361px; flex: none; }
.nav-tabs { list-style: none; margin: 0; padding: 0; height: 42px; border-bottom: 1px solid #ddd; display: flex; gap: 2px; }
.nav-tabs li { height: 41px; padding: 10px 15px; border: 1px solid transparent; line-height: 20px; color: #337ab7; }
.nav-tabs .on { height: 42px; padding-right: 14px; color: #555; background: #fff; border-color: #ddd #ddd #fff; border-radius: 4px 4px 0 0; }
.chart { width: 1361px; height: 400px; font-family: "Liberation Sans", sans-serif; }
.ticks { font-size: 26.400px; fill: #4d4d4d; }
.titles { font-size: 33px; fill: #000; }

.slider { position: relative; height: 55px; font-size: 11px; line-height: 15px; }
.lim, .val { position: absolute; top: 0; height: 15px; padding: 0 2.500px; border-radius: 3px; background: #e1e1e1; color: #333; }
.lim:nth-child(2) { right: 0; }
.val { left: 56px; width: 21px; height: 16px; padding: 0; text-align: center; line-height: 16px; background: #428bca; color: #fff; }
.rail { position: absolute; top: 25px; width: 300px; height: 8px; border: 1px solid #ccc; border-radius: 5px; background: linear-gradient(#ddd, #fff); overflow: hidden; }
.fill { height: 8px; margin: -1px 0 0 -1px; background: #428bca; }
.knob { position: absolute; left: 55px; top: 17px; width: 22px; height: 22px; border-radius: 50%; border: 1px solid #aaa; background: #dedede; box-shadow: 1px 1px 3px rgba(0,0,0,.3); z-index: 1; }
.scale { position: absolute; top: 33px; left: 0; }
.scale text { font: 9px "Liberation Sans", sans-serif; fill: #999; text-anchor: middle; }

.map { position: relative; width: 434px; height: 400px; overflow: hidden; background: #465a46; }
.imagery { width: 434px; height: 400px; }
.zoomer { position: absolute; left: 10px; top: 10px; width: 26px; border-radius: 4px; background: #fff; box-shadow: 0 1px 5px rgba(0,0,0,.65); color: #000; font-weight: 700; font-size: 18px; line-height: 26px; text-align: center; }
.zoomer span { display: block; height: 26px; }
.zoomer span:first-child { border-bottom: 1px solid #ccc; }
.credit { position: absolute; left: 0; right: 0; bottom: 0; height: 32px; padding: 0 5px; background: rgba(255,255,255,.7); font-size: 11px; line-height: 16px; letter-spacing: .030px; color: #333; }
.credit a { color: #0078a8; }
```
FILE: plot.js
```js
// Observations, grouped in runs; each run is shifted by dx, dy in chart units.
const runs = [
  { dx: 0, dy: -120, p: "314,330 319,430 329,394 334,398 339,382 399,411 424,409 429,377 433,413 439,420 448,416 453,395 463,434 483,320 513,377 523,372 528,380 533,324 538,342 543,362 553,333 558,354 563,304 568,336 572,328 578,311 593,328 602,316 607,376 612,371 652,391 657,375 667,381 677,372 682,360 692,459 697,397 708,340 732,320 751,385 756,597 761,391 766,409 775,401 786,401 793,377 798,378 801,410 806,384 811,426 826,292 876,385 881,338 886,336 895,363 900,360 906,336 916,286 955,451 970,385 980,383 985,390 990,380 1000,413 1010,356 1015,337 1020,327 1035,327 1045,321 1105,418 1115,380 1120,372 1124,385 1130,372 1134,374 1140,404 1154,340 1175,356 1180,376 1199,300 1218,405 1225,383 1233,411 1244,365 1249,381 1288,356 1293,335 1313,332 1323,346 1328,321 1338,378 1343,363 1358,404 1417,615" },
  { dx: 1440, dy: 0, p: "3,202 8,278 13,233 17,250 28,193 82,258 122,237 127,199 147,219 152,857 157,174 162,187 167,203 202,166 221,234 236,305 242,224 247,242 252,288 257,299 260,285 266,305 271,280 295,214 301,254 316,240 336,238 351,197 356,255 361,254 376,204 385,262 390,197 401,196 431,230 441,226 456,242 470,236 476,242 500,291 540,226 545,231 570,177 575,225 580,255 590,258 595,268 597,258 599,307 604,262 607,241 612,263 615,144 619,240 623,240 637,67 652,240 657,278 671,299 676,288 679,258 683,270 686,301 691,268 696,265 699,282 705,258 707,276 710,258 714,289 726,297 731,287 739,291 746,232 751,193 761,242 769,221 775,237 781,233 786,216 791,243 793,185 801,475 806,250 809,240 813,207 816,241 821,210 821,276 825,212 828,335 831,288 835,268 838,347 841,254 846,252 850,213 853,200" },
  { dx: 2280, dy: 0, p: "40,268 52,268 55,300 62,278 72,277 80,288 84,776 91,794 100,785 105,791 110,690 120,818 140,992 160,985 175,520 184,713 190,732 210,794 213,762 216,788 220,849 222,760 229,786 232,606 237,513 239,703 254,411 257,386 282,265 288,275 293,270 299,349 302,330 304,388 307,410 311,399 315,445 317,423 322,502 326,508 330,525 334,611 336,602 338,623 341,522 344,531 346,798 356,716 359,699 361,620 369,358 376,344 393,364 400,230 403,262 408,246 413,315 416,328 418,352 421,188 424,414 428,441 430,459 433,463 434,446 438,530 440,545 443,535 446,556 448,600 455,666 460,715 468,544 471,483 473,381 492,313 496,358 513,210 520,200 523,198 526,211 530,181 535,223 540,187 545,195 548,169 550,231 553,214 556,270 558,307 560,349 563,303 565,341 568,383 585,880 607,930 615,660 619,684 622,707 625,580 627,684 629,620 635,518 640,445 644,402 650,402 655,436 657,383 660,436 662,419 665,442 670,490 672,493 675,537 677,559 680,593 685,643 712,1006 716,1006 744,380 747,532 754,563 757,690 759,835 761,819 764,932 767,950 770,934 775,947 778,909 783,802 785,916 789,890 793,882 798,799 801,921 803,972 806,1018 809,878 811,777 813,532 821,527 831,487 838,372 841,403 846,356 849,453 851,440 861,552 867,555 868,519 873,572 876,623 878,678 881,606 883,684 886,728 888,762 891,789 893,816 895,800 898,815 901,768 903,855 908,797 918,670 928,564" },
  { dx: 3180, dy: 0, p: "50,405 57,461 60,360 66,539 72,523 75,607 78,614 80,705 85,697 88,675 90,741 93,732 95,675 114,766 117,795 120,774 123,783 125,705 132,770 135,702 149,461 157,295 182,293 184,283 187,346 190,358 192,426 195,427 199,377 210,380 214,337 219,383 225,428 230,447 232,522 237,619 247,435 259,468 279,230 289,440 303,142 308,149 313,166 318,161 323,222 328,189 334,238 338,322 343,341 353,402 358,371 378,174 438,321 443,287 448,317 453,387 458,437 472,336 488,151 498,232 513,227 518,204 527,194 533,197 538,214 548,181 553,191 558,252 562,243 567,302 582,422 622,173 636,208 642,218 652,210 657,203 662,229 672,190 677,199 682,268 687,302 692,395 702,426 707,347 717,143" }
];

const parse = (s, dx, dy) => s.split(" ").map(t => { const [x, y] = t.split(",").map(Number); return [x + dx, y + dy]; });
const obs = runs.flatMap(r => parse(r.p, r.dx, r.dy));
document.getElementById("obs").setAttribute("d", "M" + obs.map(p => p.join(" ")).join("L"));
document.getElementById("dots").innerHTML = obs.map(([x, y]) => `<circle cx="${x}" cy="${y}" r="6.8"/>`).join("");

// Catmull-Rom spline through the given points.
function smooth(p) {
  let d = "M" + p[0].join(" ");
  for (let i = 0; i < p.length - 1; i++) {
    const a = p[i - 1] || p[i], b = p[i], c = p[i + 1], e = p[i + 2] || c;
    d += `C${b[0] + (c[0] - a[0]) / 6} ${b[1] + (c[1] - a[1]) / 6} ${c[0] - (e[0] - b[0]) / 6} ${c[1] - (e[1] - b[1]) / 6} ${c[0]} ${c[1]}`;
  }
  return d;
}

// Stable segment: one seasonal cycle, repeated yearly.
const season = [[0, 195], [5, 200], [15, 235], [25, 255], [37, 253], [50, 258], [67, 250], [76, 259], [89, 278], [97, 264], [107, 212]];
let stable = [[314, 260], [326, 250], [335, 259], [345, 277], [356, 262], [366, 210]];
for (let k = 0; k < 18; k++) for (const [x, y] of season) {
  const px = 371 + 113.4 * k + x;
  if (px < 2358) stable.push([px, y]);
}
stable.push([2360, 262]);

const second = parse("80,665 88,720 100,790 118,882 132,775 145,690 158,655 170,560 182,491 190,530 205,630 220,710 232,766 245,680 255,590 262,560 272,530 283,440 296,374 305,430 320,530 333,600 346,646 357,570 368,470 377,437 388,410 397,330 409,258 420,310 433,390 445,480 459,530 470,460 480,370 490,320 500,300 512,190 523,139 533,190 545,270 555,340 568,397", 2280, 0);
const third = parse("568,905 574,926 582,890 590,800 600,710 612,665 627,614 637,670 648,714 662,718 672,760 687,860 698,800 706,710 715,640 727,600 740,550 750,590 762,650 775,656 785,700 800,797 812,720 822,630 832,570 843,520 853,486 865,540 875,586 890,592 900,650 914,732 925,650 935,560", 2280, 0)
  .concat(parse("40,520 50,470 66,421 78,470 90,522 103,526 113,580 127,668 137,610 148,490 158,430 180,357 192,400 202,457 216,462 227,520 240,604 250,560 260,460 270,380 280,330 293,292 305,340 316,393 330,399 340,440 355,539 366,470 376,350 387,300 407,228 420,280 430,328 443,333 453,380 468,474 478,420 488,290 500,220 520,163 533,220 542,266 557,270 567,320 582,410 592,350 602,240 612,170 634,98 645,150 656,202 670,206 680,260 695,346 705,310 711,230 717,168", 3180, 0));
document.getElementById("fit").setAttribute("d", smooth(stable) + smooth(second) + smooth(third));

// Slider scale
let minor = "", major = "", nums = "";
for (let i = 0; i <= 30; i++) {
  const x = Math.floor(10.500 + i * 9.270) + .5;
  if (i % 3) minor += `M${x} 0v4`;
  else { major += `M${x} 0v8`; nums += `<text x="${x}" y="20">${i / 30 === 1 ? 1 : i / 30 ? (i / 30).toFixed(1) : 0}</text>`; }
}
document.getElementById("minor").setAttribute("d", minor);
document.getElementById("major").setAttribute("d", major);
document.getElementById("nums").innerHTML = nums;
```
